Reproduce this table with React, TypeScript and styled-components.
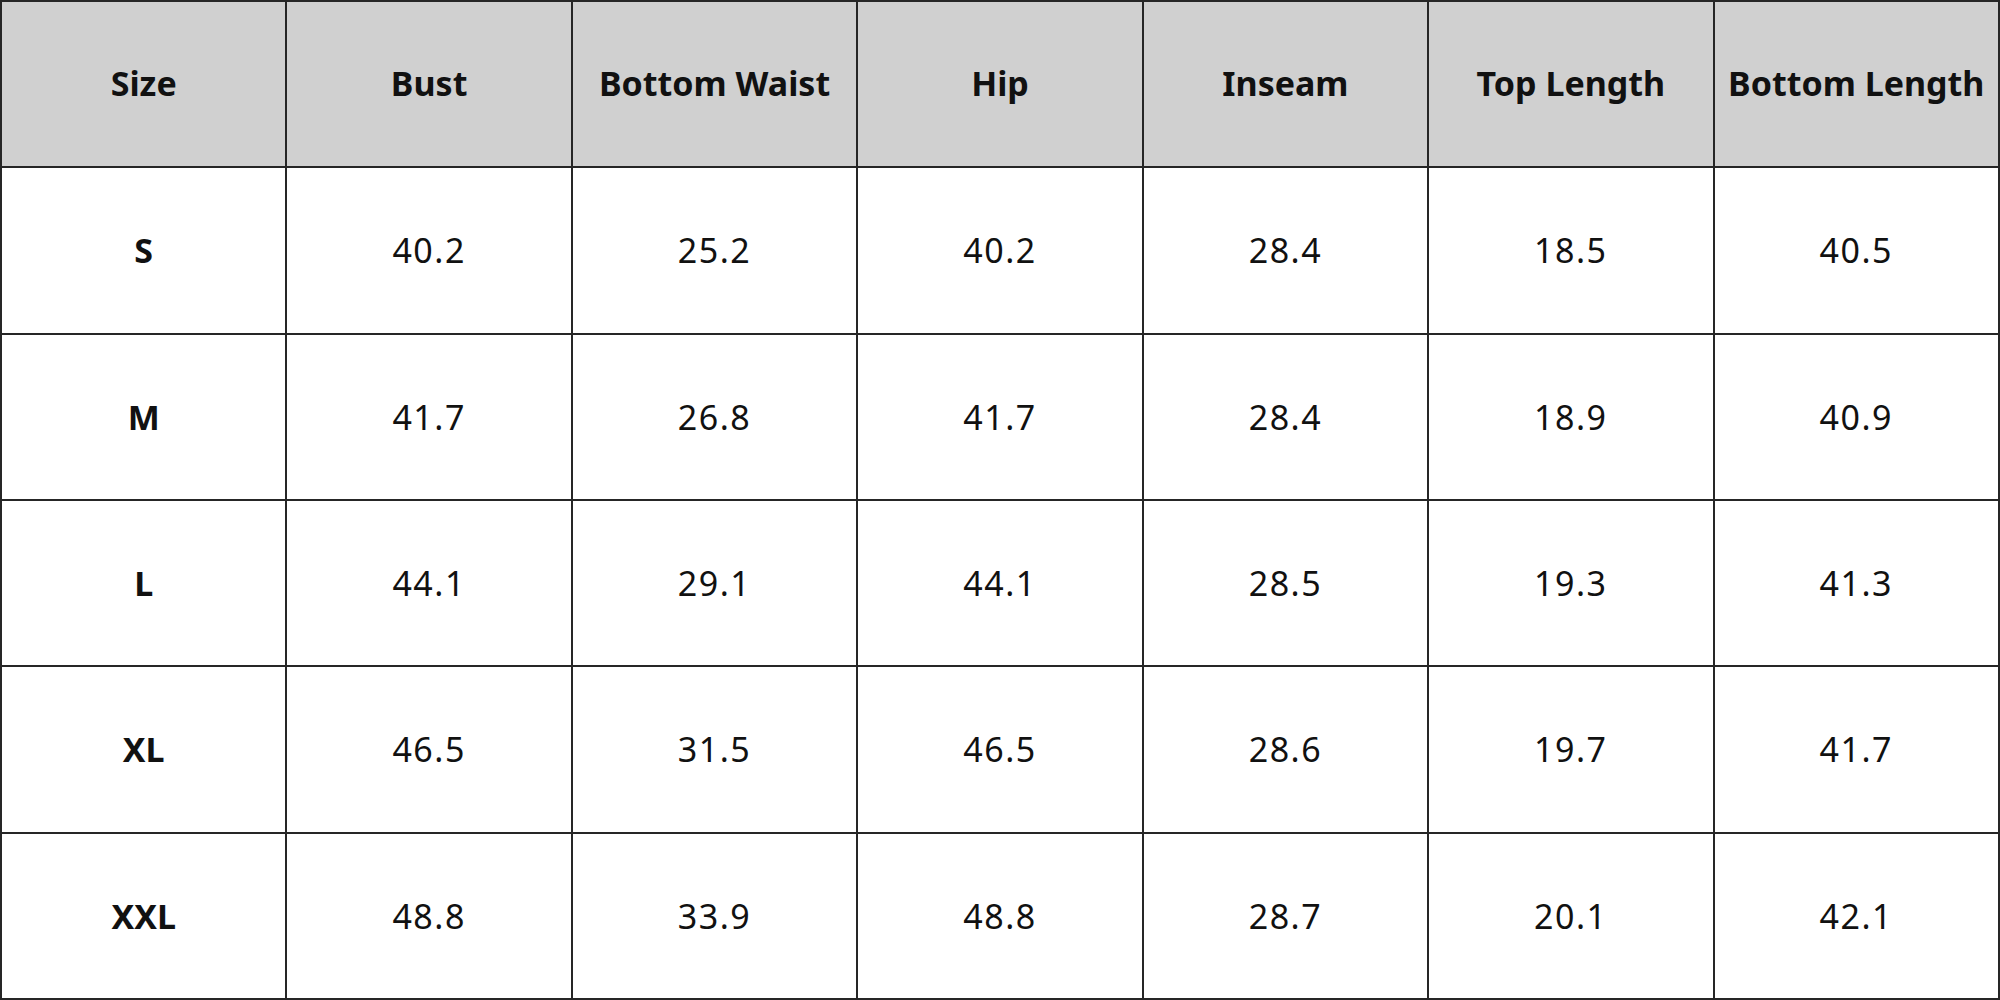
import React from 'react'
import styled, { createGlobalStyle } from 'styled-components'

const GlobalStyle = createGlobalStyle`
  html, body {
    margin: 0;
    padding: 0;
    background: #ffffff;
  }
`;

const Grid = styled.div`
  width: 2000px;
  height: 1000px;
  box-sizing: border-box;
  display: grid;
  grid-template-columns: repeat(7, 1fr);
  grid-template-rows: repeat(6, 1fr);
  gap: 2px;
  padding: 2px;
  background: #262626;
  font-family: "Noto Sans", "Open Sans", sans-serif;
  color: #111111;
`;

const Cell = styled.div<{ $head?: boolean; $bold?: boolean }>`
  display: flex;
  align-items: center;
  justify-content: center;
  padding-bottom: ${(p) => (p.$head ? '2px' : '0')};
  background: ${(p) => (p.$head ? '#d0d0d0' : '#ffffff')};
  font-size: 34px;
  font-weight: ${(p) => (p.$bold ? 700 : 400)};
  letter-spacing: ${(p) => (p.$bold ? '0' : '1.5px')};
  white-space: nowrap;
`;

const headers = ['Size', 'Bust', 'Bottom Waist', 'Hip', 'Inseam', 'Top Length', 'Bottom Length'];

const rows = [
  ['S', '40.2', '25.2', '40.2', '28.4', '18.5', '40.5'],
  ['M', '41.7', '26.8', '41.7', '28.4', '18.9', '40.9'],
  ['L', '44.1', '29.1', '44.1', '28.5', '19.3', '41.3'],
  ['XL', '46.5', '31.5', '46.5', '28.6', '19.7', '41.7'],
  ['XXL', '48.8', '33.9', '48.8', '28.7', '20.1', '42.1'],
];

const App = () => {
  return (
    <>
      <GlobalStyle />
      <Grid>
        {headers.map((h) => (
          <Cell key={h} $head $bold>
            {h}
          </Cell>
        ))}
        {rows.map((row) =>
          row.map((val, i) => (
            <Cell key={row[0] + i} $bold={i === 0}>
              {val}
            </Cell>
          ))
        )}
      </Grid>
    </>
  )
}

export default App
